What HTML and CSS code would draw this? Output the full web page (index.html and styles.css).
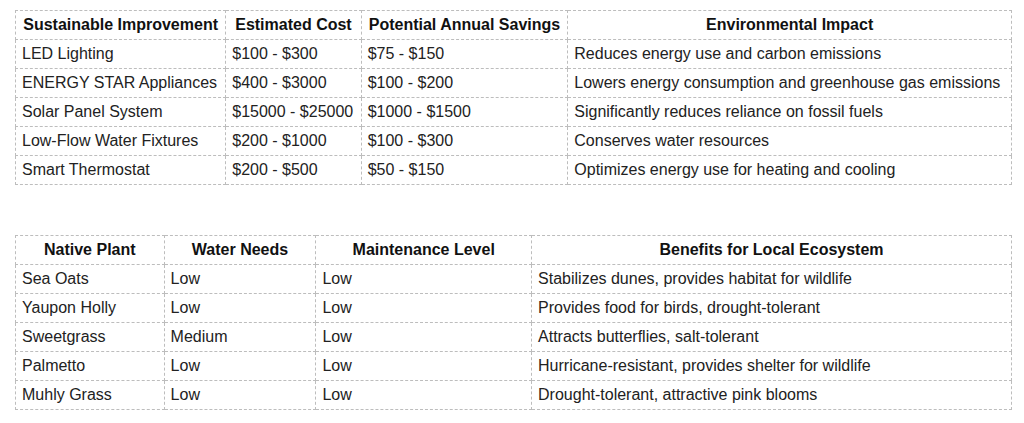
FILE: index.html
```html
<!DOCTYPE html>
<html>
<head>
<meta charset="utf-8">
<link rel="stylesheet" href="styles.css">
</head>
<body>
<table class="grid">
  <thead>
    <tr><th>Sustainable Improvement</th><th>Estimated Cost</th><th>Potential Annual Savings</th><th>Environmental Impact</th></tr>
  </thead>
  <tbody>
    <tr><td>LED Lighting</td><td>$100 - $300</td><td>$75 - $150</td><td>Reduces energy use and carbon emissions</td></tr>
    <tr><td>ENERGY STAR Appliances</td><td>$400 - $3000</td><td>$100 - $200</td><td>Lowers energy consumption and greenhouse gas emissions</td></tr>
    <tr><td>Solar Panel System</td><td>$15000 - $25000</td><td>$1000 - $1500</td><td>Significantly reduces reliance on fossil fuels</td></tr>
    <tr><td>Low-Flow Water Fixtures</td><td>$200 - $1000</td><td>$100 - $300</td><td>Conserves water resources</td></tr>
    <tr><td>Smart Thermostat</td><td>$200 - $500</td><td>$50 - $150</td><td>Optimizes energy use for heating and cooling</td></tr>
  </tbody>
</table>
<table class="grid second">
  <thead>
    <tr><th>Native Plant</th><th>Water Needs</th><th>Maintenance Level</th><th>Benefits for Local Ecosystem</th></tr>
  </thead>
  <tbody>
    <tr><td>Sea Oats</td><td>Low</td><td>Low</td><td>Stabilizes dunes, provides habitat for wildlife</td></tr>
    <tr><td>Yaupon Holly</td><td>Low</td><td>Low</td><td>Provides food for birds, drought-tolerant</td></tr>
    <tr><td>Sweetgrass</td><td>Medium</td><td>Low</td><td>Attracts butterflies, salt-tolerant</td></tr>
    <tr><td>Palmetto</td><td>Low</td><td>Low</td><td>Hurricane-resistant, provides shelter for wildlife</td></tr>
    <tr><td>Muhly Grass</td><td>Low</td><td>Low</td><td>Drought-tolerant, attractive pink blooms</td></tr>
  </tbody>
</table>
</body>
</html>
```

FILE: styles.css
```css
html, body {
  margin: 0;
  background: #ffffff;
}
body {
  padding: 10px 12px 0 15px;
  font-family: "Liberation Sans", Arial, sans-serif;
  font-size: 16px;
  color: #222222;
}
.grid {
  width: 100%;
  border-collapse: collapse;
  line-height: 18px;
}
.second {
  margin-top: 50px;
}
.grid th,
.grid td {
  border: 1px dashed #bdbdbd;
  padding: 5px 6px;
}
.grid th {
  font-weight: bold;
  text-align: center;
  color: #111111;
}
.grid td {
  text-align: left;
}
```
